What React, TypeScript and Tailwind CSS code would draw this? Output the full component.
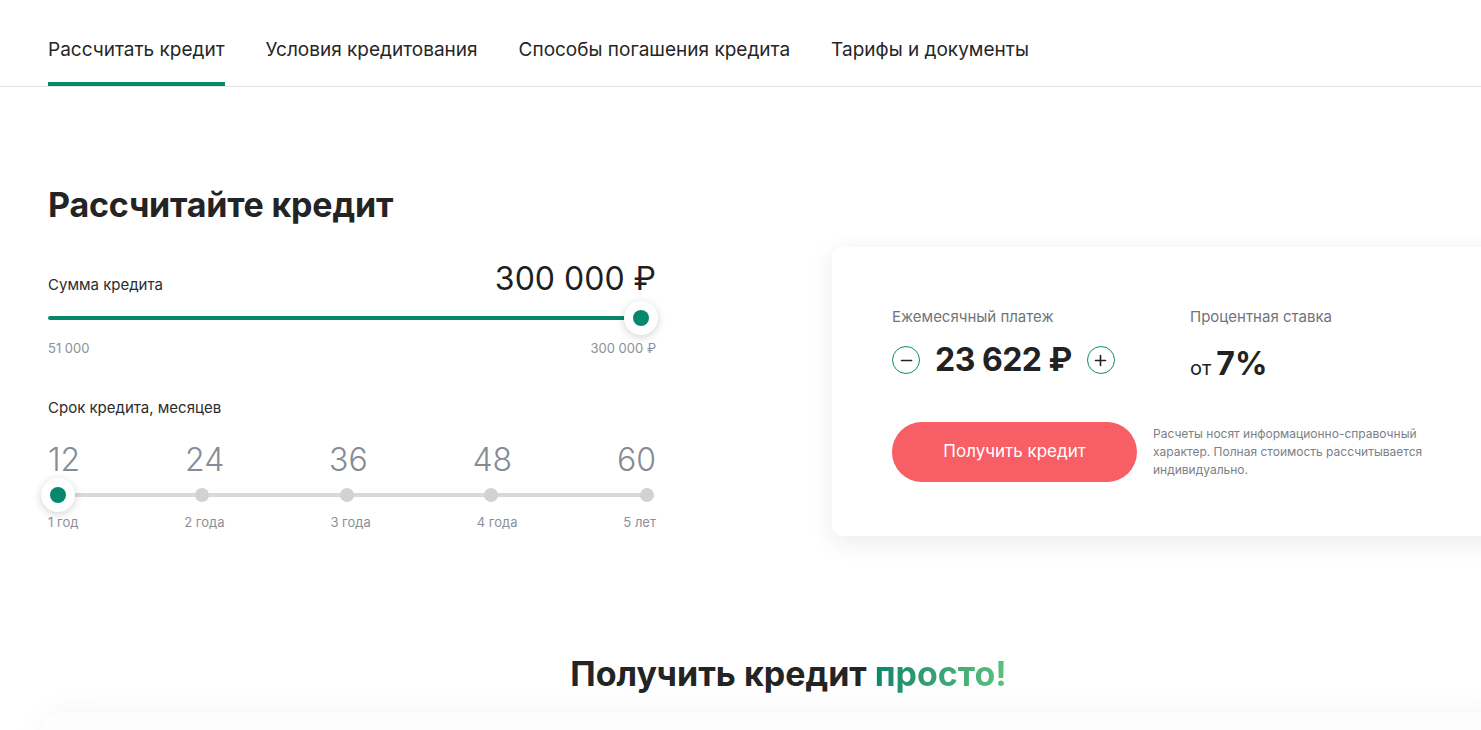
import type React from "react"

const tabs = ["Рассчитать кредит", "Условия кредитования", "Способы погашения кредита", "Тарифы и документы"]

const terms = [
  { n: "12", label: "1 год" },
  { n: "24", label: "2 года" },
  { n: "36", label: "3 года" },
  { n: "48", label: "4 года" },
  { n: "60", label: "5 лет" },
]

// dot centres on the term slider, px from the left of the column
const dotLeft = ["left-[154px]", "left-[299px]", "left-[443px]", "left-[599px]"]

const Knob: React.FC<{ className?: string }> = ({ className }) => (
  <div
    className={`absolute top-1/2 -translate-x-1/2 -translate-y-1/2 w-[34px] h-[34px] rounded-full bg-white shadow-[0_2px_8px_rgba(0,0,0,0.18)] flex items-center justify-center ${className ?? ""}`}
  >
    <div className="w-[16px] h-[16px] rounded-full bg-[#07876b]"></div>
  </div>
)

const RoundBtn: React.FC<{ sign: "-" | "+" }> = ({ sign }) => (
  <button className="w-[28px] h-[28px] rounded-full border border-[#0d8d6f] flex items-center justify-center shrink-0">
    <svg width="13" height="13" viewBox="0 0 13 13" fill="none" stroke="#222" strokeWidth="1.6" strokeLinecap="round">
      <path d="M1.5 6.5h10" />
      {sign === "+" && <path d="M6.5 1.5v10" />}
    </svg>
  </button>
)

export default function App() {
  return (
    <div className="min-h-screen bg-white overflow-hidden text-[#242424] font-['Inter',sans-serif]">
      <nav className="h-[87px] border-b border-[#e3e3e3] flex items-stretch gap-[41px] px-12">
        {tabs.map((t, i) => (
          <a
            key={t}
            className={`flex items-center pt-[16px] text-[19px] leading-none text-[#262626] border-b-4 ${
              i === 0 ? "border-[#07876b]" : "border-transparent"
            }`}
          >
            {t}
          </a>
        ))}
      </nav>

      <main className="px-12">
        <div className="flex items-start">
          <section className="w-[608px] shrink-0 pt-[97px]">
            <h2 className="text-[34px] leading-[41px] font-bold tracking-[-0.2px]">Рассчитайте кредит</h2>

            <div className="mt-[35px] flex items-baseline justify-between">
              <span className="text-[15px] text-[#2c2c2c]">Сумма кредита</span>
              <span className="text-[32px] leading-[38px] font-normal text-[#1f1f1f]">300 000 ₽</span>
            </div>
            <div className="relative h-9 mt-[2px]">
              <div className="absolute left-0 right-[15px] top-1/2 -translate-y-1/2 h-[4px] rounded-full bg-[#07876b]"></div>
              <Knob className="left-[593px]" />
            </div>
            <div className="mt-[4px] flex justify-between text-[13px] leading-4 text-[#8c9098]">
              <span>51 000</span>
              <span>300 000 ₽</span>
            </div>

            <div className="mt-[42px] text-[15px] leading-5 text-[#2c2c2c]">Срок кредита, месяцев</div>
            <div className="mt-[23px] flex justify-between text-[32px] leading-[38px] font-light text-[#868b94]">
              {terms.map((t) => (
                <span key={t.n}>{t.n}</span>
              ))}
            </div>
            <div className="relative h-9 -mt-[2px]">
              <div className="absolute left-[10px] right-[9px] top-1/2 -translate-y-1/2 h-[4px] bg-[#d9d9d9]"></div>
              {dotLeft.map((l) => (
                <div
                  key={l}
                  className={`absolute ${l} top-1/2 -translate-x-1/2 -translate-y-1/2 w-[14px] h-[14px] rounded-full bg-[#d2d2d2]`}
                ></div>
              ))}
              <Knob className="left-[10px]" />
            </div>
            <div className="mt-[1px] flex justify-between text-[13px] leading-4 text-[#8c9098]">
              {terms.map((t) => (
                <span key={t.label}>{t.label}</span>
              ))}
            </div>
          </section>

          <aside className="ml-[176px] mt-[160px] w-[720px] shrink-0 rounded-[10px] bg-white shadow-[0_6px_24px_rgba(20,30,50,0.09)] pl-[60px] pt-[60px] pb-[54px]">
            <div className="flex">
              <div className="w-[298px]">
                <div className="text-[15px] leading-5 text-[#6f747b]">Ежемесячный платеж</div>
                <div className="mt-[14px] flex items-center h-[38px]">
                  <RoundBtn sign="-" />
                  <span className="ml-[15px] mr-[15px] text-[32px] font-bold leading-[38px] text-[#222] tracking-[-0.5px]">
                    23 622 ₽
                  </span>
                  <RoundBtn sign="+" />
                </div>
              </div>
              <div>
                <div className="text-[15px] leading-5 text-[#6f747b]">Процентная ставка</div>
                <div className="mt-[14px] flex items-baseline h-[38px] pt-[4px]">
                  <span className="text-[20px] text-[#222]">от</span>
                  <span className="ml-[5px] text-[32px] font-bold leading-[38px] text-[#222]">7%</span>
                </div>
              </div>
            </div>
            <div className="mt-[43px] flex items-center gap-4">
              <button className="w-[245px] h-[60px] rounded-full bg-[#f75e66] text-white text-[17px]">
                Получить кредит
              </button>
              <p className="w-[290px] text-[12px] leading-[18px] text-[#7c8087]">
                Расчеты носят информационно-справочный характер. Полная стоимость рассчитывается индивидуально.
              </p>
            </div>
          </aside>
        </div>

        <h2 className="mt-[117px] pl-[96px] text-center text-[34px] leading-[41px] font-bold">
          Получить кредит{" "}
          <span className="bg-gradient-to-r from-[#07876b] to-[#5cc27c] bg-clip-text text-transparent">просто!</span>
        </h2>
        <div className="mt-[18px] -ml-[10px] -mr-24 h-[120px] rounded-[30px] bg-[#fdfdfd] shadow-[0_-2px_30px_rgba(20,30,50,0.045)]"></div>
      </main>
    </div>
  )
}
